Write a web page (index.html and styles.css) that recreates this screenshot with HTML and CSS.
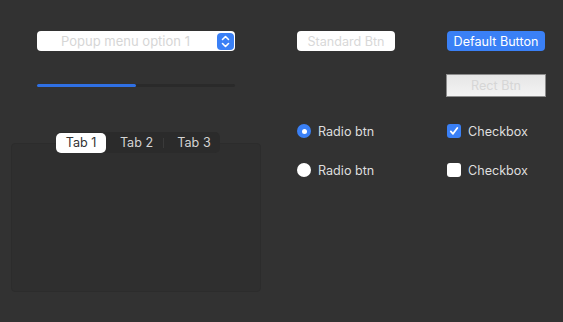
FILE: index.html
```html
<!DOCTYPE html>
<html lang="en">
<head>
    <meta charset="UTF-8">
    <title>Controls</title>
    <link rel="stylesheet" href="styles.css">
</head>
<body>

<div class="window">
    <div class="col col-left">
        <div class="popup">
            <span class="popup-label">Popup menu option 1</span>
            <span class="stepper">
                <svg width="9" height="13" viewBox="0 0 9 13">
                    <path d="M1.5 4.5 L4.5 1.5 L7.5 4.5 M1.5 8.5 L4.5 11.5 L7.5 8.5" fill="none" stroke="#fff" stroke-width="1.6" stroke-linecap="round" stroke-linejoin="round"/>
                </svg>
            </span>
        </div>

        <div class="progress">
            <div class="progress-fill" style="width: 50%"></div>
        </div>

        <div class="tabview">
            <div class="tabs">
                <div class="tab active">Tab 1</div>
                <div class="tab tab-2">Tab 2</div>
                <div class="tab-sep"></div>
                <div class="tab tab-3">Tab 3</div>
            </div>
            <div class="tab-box"></div>
        </div>
    </div>

    <div class="col col-mid">
        <button class="btn btn-standard">Standard Btn</button>
        <label class="option first">
            <span class="radio on"></span>
            <span>Radio btn</span>
        </label>
        <label class="option">
            <span class="radio"></span>
            <span>Radio btn</span>
        </label>
    </div>

    <div class="col col-right">
        <button class="btn btn-default">Default Button</button>
        <button class="btn btn-rect">Rect Btn</button>
        <label class="option first-check">
            <span class="check on">
                <svg width="10" height="10" viewBox="0 0 10 10">
                    <path d="M1.8 5.4 L4 7.8 L8.3 2" fill="none" stroke="#fff" stroke-width="1.8" stroke-linecap="round" stroke-linejoin="round"/>
                </svg>
            </span>
            <span>Checkbox</span>
        </label>
        <label class="option">
            <span class="check"></span>
            <span>Checkbox</span>
        </label>
    </div>
</div>

</body>
</html>
```

FILE: styles.css
```css
* {
    box-sizing: border-box;
}

body {
    margin: 0;
    background: #323232;
    font-family: Inter, "Liberation Sans", sans-serif;
    font-size: 12.6px;
    color: #dedede;
}

.window {
    display: flex;
    padding: 31px 0 0 11px;
    height: 322px;
}

.col {
    display: flex;
    flex-direction: column;
}

.col-left {
    width: 250px;
}

.col-mid {
    width: 149px;
    margin-left: 36px;
    align-items: flex-start;
}

.col-right {
    width: 100px;
    align-items: flex-start;
}

/* popup */
.popup {
    display: flex;
    align-items: center;
    margin: 0 26px;
    height: 20px;
    background: #fff;
    border-radius: 4px;
    padding: 0 1px 0 0;
}

.popup-label {
    flex: 1;
    padding-right: 3px;
    text-align: center;
    color: #d6d6d6;
    font-size: 13px;
}

.stepper {
    display: flex;
    align-items: center;
    justify-content: center;
    width: 17px;
    height: 17px;
    border-radius: 4px;
    background: #3a80f6;
}

/* progress */
.progress {
    margin: 33px 26px 0;
    height: 3px;
    background: #2a2a2a;
    border-radius: 2px;
}

.progress-fill {
    height: 100%;
    background: #2f70e4;
    border-radius: 2px;
}

/* tabs */
.tabview {
    margin-top: 45px;
    display: flex;
    flex-direction: column;
    align-items: center;
}

.tabs {
    position: relative;
    z-index: 1;
    display: flex;
    align-items: center;
    width: 164px;
    height: 21px;
    margin-left: 4px;
    margin-bottom: -10px;
    background: #2b2b2b;
    border-radius: 5px;
}

.tab {
    line-height: 20px;
    text-align: center;
    color: #d4d4d4;
}

.tab.active {
    width: 50px;
    height: 20px;
    margin-top: 1px;
    background: #fff;
    color: #333;
    border-radius: 5px;
}

.tab-2 {
    width: 57px;
    padding-left: 4px;
}

.tab-3 {
    width: 56px;
    padding-left: 4px;
}

.tab-sep {
    width: 1px;
    height: 10px;
    background: #3a3a3a;
}

.tab-box {
    width: 250px;
    height: 149px;
    background: #2f2f2f;
    border: 1px solid #2c2c2c;
    border-radius: 4px;
}

/* buttons */
.btn {
    font-family: inherit;
    font-size: 12.6px;
    border: 0;
    padding: 0;
    height: 20px;
    border-radius: 4px;
}

.btn-standard {
    width: 98px;
    background: #fff;
    color: #d8d8d8;
}

.btn-default {
    width: 98px;
    margin-left: 1px;
    background: #3a80f6;
    color: #fff;
}

.btn-rect {
    width: 100px;
    height: 23px;
    margin-top: 23px;
    border: 1px solid #8c8c8c;
    border-radius: 0;
    background: linear-gradient(#e6e6e6, #f3f3f3);
    color: #d6d6d6;
}

/* radio / checkbox */
.option {
    display: flex;
    align-items: center;
    gap: 7px;
    height: 16px;
    margin-top: 23px;
}

.option.first {
    margin-top: 72px;
}

.option.first-check {
    margin-top: 26px;
    margin-left: 1px;
}

.option.first-check + .option {
    margin-left: 1px;
}

.radio {
    width: 14px;
    height: 14px;
    border-radius: 50%;
    background: #fff;
    display: flex;
    align-items: center;
    justify-content: center;
}

.radio.on {
    background: #3a80f6;
}

.radio.on::after {
    content: "";
    width: 5px;
    height: 5px;
    border-radius: 50%;
    background: #fff;
}

.check {
    width: 14px;
    height: 14px;
    border-radius: 3px;
    background: #fff;
    display: flex;
    align-items: center;
    justify-content: center;
}

.check.on {
    background: #3a80f6;
}
```
